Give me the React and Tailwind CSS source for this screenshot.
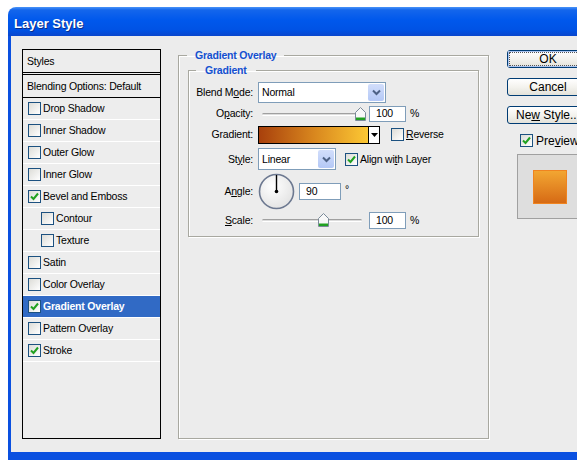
import React from "react";

function Check({ checked }) {
  return (
    <span className="w-[13px] h-[13px] shrink-0 border border-[#1c5180] bg-gradient-to-br from-[#dcdcd7] to-white flex items-center justify-center">
      {checked && (
        <svg width="9" height="9" viewBox="0 0 9 9">
          <path d="M1 4.5 L3.5 7 L8 1.5" stroke="#21a121" strokeWidth="2" fill="none" />
        </svg>
      )}
    </span>
  );
}

function Chevron() {
  return (
    <span className="absolute right-[1px] top-[1px] bottom-[1px] w-[16px] rounded-[2px] bg-gradient-to-b from-[#d2defb] to-[#b4c8f6] flex items-center justify-center">
      <svg width="9" height="7" viewBox="0 0 9 7">
        <path d="M1 1.5 L4.5 5 L8 1.5" stroke="#4d6185" strokeWidth="2" fill="none" />
      </svg>
    </span>
  );
}

function Select({ value, w, h }) {
  return (
    <div className={`relative ${w} ${h} bg-white border border-[#7f9db9] flex items-center pl-[3px]`}>
      <span>{value}</span>
      <Chevron />
    </div>
  );
}

function Slider({ pos }) {
  return (
    <div className="relative w-[107px] h-[16px]">
      <div className="absolute left-[4px] right-[3px] top-[7px] h-[3px] rounded-full border-t border-[#a0a0a0] border-b border-b-white bg-[#dcdcdc]" />
      <svg className="absolute top-[1px]" style={{ left: pos }} width="11" height="14" viewBox="0 0 11 14">
        <path d="M0.5 5.5 L5.5 0.5 L10.5 5.5 L10.5 13.5 L0.5 13.5 Z" fill="#f8f8f8" stroke="#7a8a99" />
        <rect x="1" y="10.5" width="9" height="2.5" fill="#21a121" />
      </svg>
    </div>
  );
}

function Input({ value, w, h }) {
  return (
    <div className={`${w} ${h} bg-white border border-[#7f9db9] flex items-center pl-[6px]`}>{value}</div>
  );
}

function Label({ children }) {
  return <span className="w-[64px] text-right shrink-0 mr-[5px]">{children}</span>;
}

function Button({ children, focus }) {
  return (
    <div className="w-[82px] h-[18px] rounded-[3px] border border-[#003c74] bg-gradient-to-b from-white via-[#f4f3ee] to-[#e3e2da] flex items-center justify-center text-[12px] tracking-normal p-[1px]">
      <div className={`w-full h-full flex items-center justify-center ${focus ? "border border-dotted border-[#555] shadow-[0_0_0_1px_#aac4f0]" : ""}`}>
        <span>{children}</span>
      </div>
    </div>
  );
}

export default function App() {
  const items = [
    { label: "Drop Shadow" },
    { label: "Inner Shadow" },
    { label: "Outer Glow" },
    { label: "Inner Glow" },
    { label: "Bevel and Emboss", checked: true },
    { label: "Contour", sub: true },
    { label: "Texture", sub: true },
    { label: "Satin" },
    { label: "Color Overlay" },
    { label: "Gradient Overlay", checked: true, selected: true },
    { label: "Pattern Overlay" },
    { label: "Stroke", checked: true },
  ];

  return (
    <div className="w-[577px] h-[460px] bg-white overflow-hidden pt-[7px] pl-[8px] font-['Liberation_Sans',Arial,sans-serif] text-[10.5px] tracking-[-0.2px] text-black leading-none">
      {/* Window */}
      <div className="w-[600px] flex flex-col">
        {/* Title bar */}
        <div className="h-[29px] rounded-tl-[8px] bg-[linear-gradient(to_bottom,#4a94f8_0px,#1466ec_3px,#0058ec_45%,#0052e4_80%,#0a46cc_100%)] flex items-center pl-[6px] pt-[3px]">
          <span className="text-white font-bold text-[13px] tracking-normal [text-shadow:1px_1px_0_#0a2e8a]">Layer Style</span>
        </div>

        {/* Body */}
        <div className="h-[424px] bg-[#ececec] border-l-[3px] border-b-[8px] border-[#0a50e0] flex pl-[11px] pt-[13px]">
          {/* Styles list */}
          <div className="w-[139px] h-[390px] border border-black bg-[#ededed] flex flex-col shrink-0">
            <div className="h-[25px] border-b-[3px] border-double border-black flex items-center pl-[4px]">Styles</div>
            <div className="h-[23px] border-b border-black flex items-center pl-[4px]">Blending Options: Default</div>
            {items.map((it) => (
              <div
                key={it.label}
                className={`h-[22px] border-b border-white flex items-center ${it.sub ? "pl-[18px]" : "pl-[5px]"} ${
                  it.selected ? "bg-[#316ac5] text-white font-bold" : ""
                }`}
              >
                <Check checked={it.checked} />
                <span className="ml-[2px]">{it.label}</span>
              </div>
            ))}
          </div>

          {/* Gradient Overlay fieldset */}
          <fieldset className="ml-[17px] -mt-[1px] w-[311px] h-[391px] shrink-0 border border-[#a8a8a0] shadow-[inset_1px_1px_0_#fff,1px_1px_0_#fff]">
            <legend className="ml-[8px] px-[8px] font-bold text-[#1450d0] h-[14px] leading-[14px]">Gradient Overlay</legend>

            <fieldset className="ml-[9px] mt-[1px] w-[291px] h-[174px] border border-[#a8a8a0] shadow-[inset_1px_1px_0_#fff,1px_1px_0_#fff] pt-[4px]">
              <legend className="ml-[7px] px-[9px] font-bold text-[#1450d0] h-[14px] leading-[14px]">Gradient</legend>

              <div className="h-[23px] flex items-center">
                <Label>Blend M<u>o</u>de:</Label>
                <Select value="Normal" w="w-[128px]" h="h-[21px]" />
              </div>

              <div className="h-[19px] flex items-center">
                <Label>O<u>p</u>acity:</Label>
                <Slider pos={97} />
                <span className="ml-[4px]"><Input value="100" w="w-[37px]" h="h-[16px]" /></span>
                <span className="ml-[4px]">%</span>
              </div>

              <div className="h-[23px] flex items-center">
                <Label>Gradient:</Label>
                <div className="w-[122px] h-[18px] border border-black flex">
                  <div className="flex-1 bg-[linear-gradient(to_right,#a8400c,#d8861e_50%,#fcc834)]" />
                  <div className="w-[11px] border-l border-black bg-white flex items-center justify-center">
                    <svg width="7" height="4" viewBox="0 0 7 4"><path d="M0 0 L7 0 L3.5 4 Z" fill="#000" /></svg>
                  </div>
                </div>
                <span className="ml-[11px]"><Check /></span>
                <span className="ml-[2px]"><u>R</u>everse</span>
              </div>

              <div className="h-[26px] flex items-center">
                <Label>St<u>y</u>le:</Label>
                <Select value="Linear" w="w-[78px]" h="h-[22px]" />
                <span className="ml-[9px]"><Check checked /></span>
                <span className="ml-[2px]">Align wi<u>t</u>h Layer</span>
              </div>

              <div className="h-[38px] flex items-center">
                <Label>A<u>n</u>gle:</Label>
                <svg width="37" height="37" viewBox="0 0 37 37">
                  <defs>
                    <radialGradient id="dial" cx="40%" cy="35%" r="70%">
                      <stop offset="0%" stopColor="#ffffff" />
                      <stop offset="100%" stopColor="#e2e2e2" />
                    </radialGradient>
                  </defs>
                  <circle cx="18.5" cy="18.5" r="17" fill="url(#dial)" stroke="#6c7890" strokeWidth="1.6" />
                  <line x1="18.5" y1="18.5" x2="18.5" y2="2" stroke="#000" strokeWidth="1.4" />
                  <circle cx="18.5" cy="18.5" r="1.8" fill="#000" />
                </svg>
                <span className="ml-[4px]"><Input value="90" w="w-[42px]" h="h-[17px]" /></span>
                <span className="ml-[4px] self-start mt-[12px]">°</span>
              </div>

              <div className="h-[20px] flex items-center">
                <Label><u>S</u>cale:</Label>
                <Slider pos={60} />
                <span className="ml-[4px]"><Input value="100" w="w-[37px]" h="h-[17px]" /></span>
                <span className="ml-[4px]">%</span>
              </div>
            </fieldset>
          </fieldset>

          {/* Buttons */}
          <div className="ml-[18px] mt-[1px] flex flex-col shrink-0">
            <Button focus>OK</Button>
            <div className="mt-[10px]"><Button>Cancel</Button></div>
            <div className="mt-[10px]"><Button>Ne<u>w</u> Style...</Button></div>
            <div className="mt-[10px] ml-[13px] flex items-center text-[12px] tracking-normal">
              <Check checked />
              <span className="ml-[3px]">Pre<u>v</u>iew</span>
            </div>
            <div className="mt-[7px] ml-[10px] w-[80px] h-[65px] border border-[#a0a0a0] bg-[#dedede] flex items-center pl-[15px]">
              <div className="w-[34px] h-[34px] border border-[#f08420] bg-gradient-to-b from-[#f2a632] to-[#d66a14]" />
            </div>
          </div>
        </div>
      </div>
    </div>
  );
}
